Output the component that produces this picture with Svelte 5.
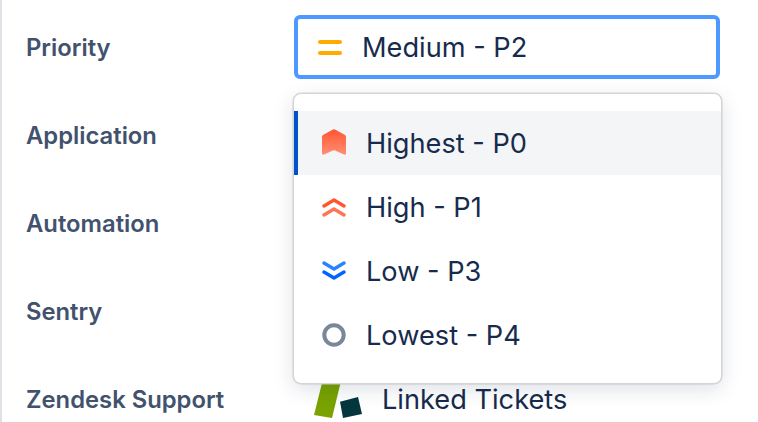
<script>
  const fields = ['Application', 'Automation', 'Sentry'];
  const options = [
    { name: 'Highest - P0', icon: 'highest', active: true },
    { name: 'High - P1', icon: 'high' },
    { name: 'Low - P3', icon: 'low' },
    { name: 'Lowest - P4', icon: 'lowest' },
  ];
</script>

<main>
  <div class="row">
    <div class="label">Priority</div>
    <div class="value">
      <div class="select">
        <svg class="icon" viewBox="0 0 24 24" width="24" height="24">
          <rect x="0" y="5" width="24" height="4" rx="2" fill="#ffab00" />
          <rect x="0" y="16" width="24" height="4" rx="2" fill="#ffab00" />
        </svg>
        <span>Medium - P2</span>
      </div>
      <div class="menu">
        {#each options as option}
          <div class="option" class:active={option.active}>
            {#if option.icon == 'highest'}
              <svg class="icon tall" viewBox="0 0 24 26" width="24" height="26">
                <defs>
                  <linearGradient id="hot" x1="0" y1="0" x2="0" y2="1">
                    <stop offset="0" stop-color="#ff5630" />
                    <stop offset="1" stop-color="#ff8f73" />
                  </linearGradient>
                </defs>
                <path d="M1 6 L11 0.6 Q12 0 13 0.6 L23 6 Q24 6.5 24 8 V24 Q24 26.4 22 25.6 L13 21.4 Q12 21 11 21.4 L2 25.6 Q0 26.4 0 24 V8 Q0 6.5 1 6 Z" fill="url(#hot)" />
              </svg>
            {:else}
              <svg class="icon" viewBox="0 0 24 24" width="24" height="24">
                {#if option.icon == 'high'}
                  <path d="M2 11 L12 5 L22 11" fill="none" stroke="#ff5630" stroke-width="3.4" stroke-linecap="round" stroke-linejoin="round" />
                  <path d="M2 20 L12 14 L22 20" fill="none" stroke="#ff7452" stroke-width="3.4" stroke-linecap="round" stroke-linejoin="round" />
                {:else if option.icon == 'low'}
                  <path d="M2 4 L12 10 L22 4" fill="none" stroke="#2684ff" stroke-width="3.4" stroke-linecap="round" stroke-linejoin="round" />
                  <path d="M2 13 L12 19 L22 13" fill="none" stroke="#0065ff" stroke-width="3.4" stroke-linecap="round" stroke-linejoin="round" />
                {:else}
                  <circle cx="12" cy="12" r="9.7" fill="none" stroke="#7a869a" stroke-width="4" />
                {/if}
              </svg>
            {/if}
            <span>{option.name}</span>
          </div>
        {/each}
      </div>
    </div>
  </div>

  {#each fields as field}
    <div class="row">
      <div class="label">{field}</div>
    </div>
  {/each}

  <div class="row">
    <div class="label">Zendesk Support</div>
    <div class="value linked">
      <svg class="logo" viewBox="0 0 50 44" width="50" height="44">
        <path d="M10.5 0 L29 0 L19 41 L1 38 Z" fill="#78a300" />
        <path d="M27 24.7 L45 20 L49 37 L30 41 Z" fill="#03363d" />
      </svg>
      <span>Linked Tickets</span>
    </div>
  </div>
</main>

<style>
  :global(body) {
    background: #fff;
    overflow: hidden;
  }

  main {
    width: 758px;
    height: 422px;
    box-sizing: border-box;
    border-left: 2px solid #e0e0e6;
    padding: 3px 38px 0 24px;
    font-family: Inter, "Liberation Sans", sans-serif;
    overflow: hidden;
  }

  .row {
    display: grid;
    grid-template-columns: 268px 1fr;
    align-items: center;
    height: 88px;
  }

  .label {
    font-size: 23.8px;
    font-weight: 600;
    color: #42526e;
    padding-top: 1px;
  }

  .value {
    position: relative;
    font-size: 27.2px;
    color: #172b4d;
  }

  .select {
    display: flex;
    align-items: center;
    gap: 20px;
    height: 64px;
    box-sizing: border-box;
    border: 4px solid #4c9aff;
    border-radius: 6px;
    padding-left: 20px;
  }

  .menu {
    position: absolute;
    z-index: 1;
    top: 78px;
    left: -1px;
    right: -2px;
    height: 291px;
    box-sizing: border-box;
    padding: 17px 0;
    background: #fff;
    border: 1px solid #d4d4d4;
    border-radius: 8px;
    box-shadow: 0 6px 20px rgba(9, 30, 66, 0.13), 0 0 0 0.5px #dcdcdc;
  }

  .option {
    display: flex;
    align-items: center;
    gap: 20px;
    height: 64px;
    box-sizing: border-box;
    padding-left: 24px;
    border-left: 4px solid transparent;
  }

  .active {
    background: #f4f5f7;
    border-left-color: #0052cc;
  }

  .tall {
    margin-top: -2px;
  }

  .linked {
    display: flex;
    align-items: center;
    gap: 19px;
    padding-left: 19px;
  }
</style>
